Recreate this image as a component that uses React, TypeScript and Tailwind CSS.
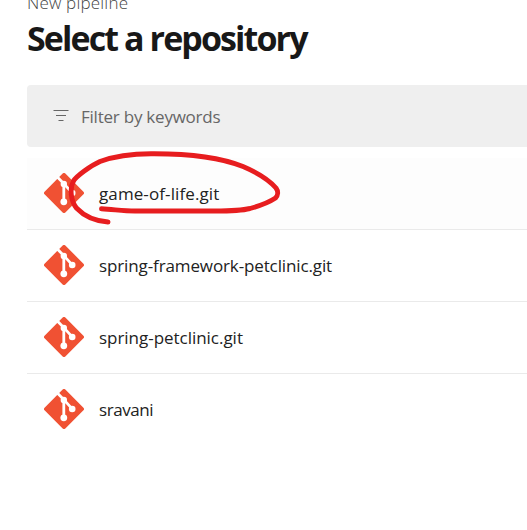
const repositories = [
  { name: "game-of-life.git", tracking: "tracking-[0.1px]" },
  { name: "spring-framework-petclinic.git", tracking: "tracking-[-0.12px]" },
  { name: "spring-petclinic.git", tracking: "tracking-[-0.03px]" },
  { name: "sravani", tracking: "tracking-[-0.45px]" },
];

function FilterIcon() {
  return (
    <svg width="16" height="14" viewBox="0 0 16 14" fill="none" stroke="#666" strokeWidth="1">
      <path d="M0.5 1.5H15.5M3 6.5H13M5.5 11.5H10.5" />
    </svg>
  );
}

function GitIcon() {
  return (
    <svg width="40" height="40" viewBox="0 0 40 40" fill="none">
      <rect x="5.3" y="5.3" width="29.4" height="29.4" rx="1.9" fill="#f05133" transform="rotate(45 20 20)" />
      <path d="M13.3 4L19.8 10.6L28 19.6M19.8 10.6V29" stroke="#fff" strokeWidth="2.8" />
      <circle cx="19.8" cy="11" r="3.2" fill="#fff" />
      <circle cx="19.8" cy="28.8" r="3.4" fill="#fff" />
      <circle cx="28.2" cy="20" r="3.3" fill="#fff" />
    </svg>
  );
}

function Annotation() {
  return (
    <svg
      className="pointer-events-none absolute left-0 top-0"
      width="527"
      height="530"
      viewBox="0 0 527 530"
      fill="none"
      stroke="#e71d1f"
      strokeWidth="4.9"
      strokeLinecap="round"
      strokeLinejoin="round"
    >
      <path d="M108 222C94 221 84 216 76.7 208.3C70.5 201 69.5 188 73.5 181C76 176.5 90 166 100 161.5C116 155.5 135 153.7 151 153.7C184 153.5 217 156 243 166.5C257 172.5 270 181 276 188C278.5 191.5 278 195.5 275.5 198C268 203 259 206 250 208.5C240 211 229 211 215 211H135C123 211 113 209.3 101.5 208.8" />
    </svg>
  );
}

export default function App() {
  return (
    <main className="relative h-[530px] w-[527px] overflow-hidden bg-white pl-[27px] font-['Open_Sans','Noto_Sans',sans-serif] text-[#1c1c1c]">
      <div className="-mt-2 h-[22px] text-[17px] leading-[22px] tracking-[0.2px] font-light text-[#444]">
        <span>New pipeline</span>
      </div>
      <h1 className="mt-[3px] h-[42px] whitespace-nowrap text-[34px] leading-[42px] font-bold tracking-[-1.9px] text-[#181818]">
        <span>Select a repository</span>
      </h1>
      <div className="mt-[26px] flex h-[62px] items-center rounded-l-[4px] bg-[#efefef] pl-[26px] text-[#666]">
        <FilterIcon />
        <span className="ml-3 pt-px text-[17px] leading-6 tracking-[-0.23px]">Filter by keywords</span>
      </div>
      <ul className="mt-[11px]">
        {repositories.map((repo, index) => (
          <li
            key={repo.name}
            className={`flex h-[72px] items-start pl-[17px] pt-[15px] ${index < 3 ? "border-b border-[#eaeaea]" : ""} ${index === 0 ? "bg-[#fdfdfd]" : ""}`}
          >
            <GitIcon />
            <span className={`ml-[15px] mt-[9px] whitespace-nowrap text-[17px] leading-6 text-[#222] ${repo.tracking}`}>{repo.name}</span>
          </li>
        ))}
      </ul>
      <Annotation />
    </main>
  );
}
